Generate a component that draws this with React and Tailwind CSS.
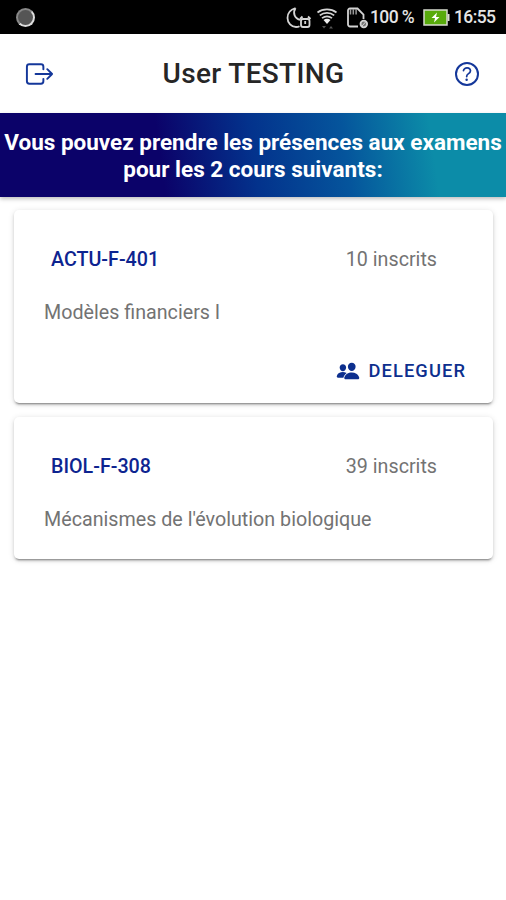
import { IoExitOutline, IoHelpCircleOutline, IoPeople } from "react-icons/io5";

const courses = [
  { code: "ACTU-F-401", name: "Modèles financiers I", count: 10, canDelegate: true },
  { code: "BIOL-F-308", name: "Mécanismes de l'évolution biologique", count: 39, canDelegate: false },
];

const MoonAlarmIcon = () => (
  <svg width="26" height="24" viewBox="0 0 26 24" fill="none" stroke="#d4d4d4" strokeWidth="1.8">
    <path d="M9.500 2C4.500 3.500 1.500 7.500 1.500 12c0 5 4 9 8.500 9 1.500 0 2.500-.2 3.500-.8M9.500 2c-3 5-1 10.500 5 12" />
    <rect x="15" y="13" width="8.500" height="8" rx="2" />
    <path d="M14 13l2.500-2.500M24.500 13L22 10.500M19.200 15v3" />
  </svg>
);

const WifiIcon = () => (
  <svg width="22" height="24" viewBox="0 0 22 24" fill="none" stroke="#d4d4d4" strokeWidth="1.7">
    <path d="M1.500 6.500C7 2.300 15 2.300 20.500 6.500M3.800 9.400c4.200-3.300 10.200-3.300 14.400 0M6 12.200c3-2.300 7-2.300 10 0" />
    <path d="M7.500 14c2-1.600 5-1.600 7 0L11 18z" fill="#eee" stroke="none" />
    <path d="M6 20h4l-2 2.500zM13 22.500l2-2.500 2 2.500z" fill="#555" stroke="none" />
  </svg>
);

const SimIcon = () => (
  <svg width="24" height="24" viewBox="0 0 24 24" fill="none" stroke="#d4d4d4" strokeWidth="1.8">
    <path d="M12 20.500H4a2 2 0 01-2-2v-14a2 2 0 012-2h7.500l6 6V13" />
    <path d="M4.500 3v5.500M7.300 3v5.500M10.100 3v5.500" strokeWidth="1.500" stroke="#999" />
    <circle cx="17.800" cy="18" r="3.300" fill="#777" />
    <path d="M16 20l3.600-4" strokeWidth="1" />
  </svg>
);

const BatteryIcon = () => (
  <svg width="27" height="17" viewBox="0 0 27 17">
    <rect x="1" y="1" width="23" height="15" fill="#58ab0c" stroke="#d8dccf" strokeWidth="1.500" />
    <rect x="24.500" y="5" width="2" height="7" fill="#d8dccf" />
    <path d="M14 3.500L8.500 9h3.500l-1 4.500L16.500 8H13z" fill="#fff" />
  </svg>
);

const StatusBar = () => (
  <div className="flex h-[34px] items-center bg-black pt-px pr-[10px] pl-4 text-[#e5e5e5]">
    <div className="h-[19px] w-[19px] rounded-full border-2 border-[#888] border-r-[#ddd] border-b-[#ddd] bg-[#555]" />
    <div className="ml-auto flex items-center">
      <MoonAlarmIcon />
      <div className="ml-1 flex">
        <WifiIcon />
      </div>
      <div className="ml-2 flex">
        <SimIcon />
      </div>
      <span className="w-[53px] text-[17.5px] font-medium tracking-[-0.6px] whitespace-nowrap">100 %</span>
      <BatteryIcon />
      <span className="ml-1 w-[42px] text-[17.5px] font-medium tracking-[-0.6px] whitespace-nowrap">16:55</span>
    </div>
  </div>
);

const Header = () => (
  <header className="flex h-[79px] items-center justify-between pr-[23px] pl-6">
    <button aria-label="Déconnexion">
      <IoExitOutline className="h-8 w-[31px] text-[#14379a]" />
    </button>
    <h1 className="pl-px text-[28px] font-medium tracking-[0.35px] text-[#262626]">User TESTING</h1>
    <button aria-label="Aide">
      <IoHelpCircleOutline className="h-8 w-8 text-[#14379a]" />
    </button>
  </header>
);

const CourseCard = ({ course }) => (
  <section className="rounded-[5px] bg-white px-[30px] shadow-[0_3px_2px_-2px_rgba(0,0,0,0.35),0_2px_3px_rgba(0,0,0,0.14),0_1px_6px_rgba(0,0,0,0.12)]">
    <div className="flex items-center justify-between pt-[38px] pr-[26px] pl-[7px] text-[19.7px] leading-6">
      <h2 className="font-medium text-[#0d2490]">{course.code}</h2>
      <span className="text-[#737373]">{course.count} inscrits</span>
    </div>
    <p className="mt-[29px] text-[19.7px] leading-6 text-[#737373]">{course.name}</p>
    {course.canDelegate ? (
      <div className="flex justify-end pt-[34px] pb-5">
        <button className="-mr-[3px] flex items-center gap-2 text-[18.3px] leading-6 font-medium tracking-[1.1px] text-[#0d2f8e]">
          <IoPeople className="h-6 w-6" />
          DELEGUER
        </button>
      </div>
    ) : (
      <div className="h-[27px]" />
    )}
  </section>
);

export default function App() {
  return (
    <div className="min-h-screen overflow-hidden bg-white font-[Roboto,sans-serif]">
      <StatusBar />
      <Header />
      <div className="flex h-[84px] items-center justify-center bg-[linear-gradient(82deg,#0b0269_0%,#0b0269_32%,#03328c_50%,#05559c_68%,#0c8ca8_85%,#0c8ca8_100%)] pt-px text-center text-[22.5px] leading-[27px] font-bold text-white shadow-[0_2px_4px_rgba(0,0,0,0.25)]">
        <p className="whitespace-nowrap">
          Vous pouvez prendre les présences aux examens
          <br />
          pour les 2 cours suivants:
        </p>
      </div>
      <main className="flex flex-col gap-[14px] pt-[13px] pr-[13px] pl-[14px]">
        {courses.map((course) => (
          <CourseCard key={course.code} course={course} />
        ))}
      </main>
    </div>
  );
}
